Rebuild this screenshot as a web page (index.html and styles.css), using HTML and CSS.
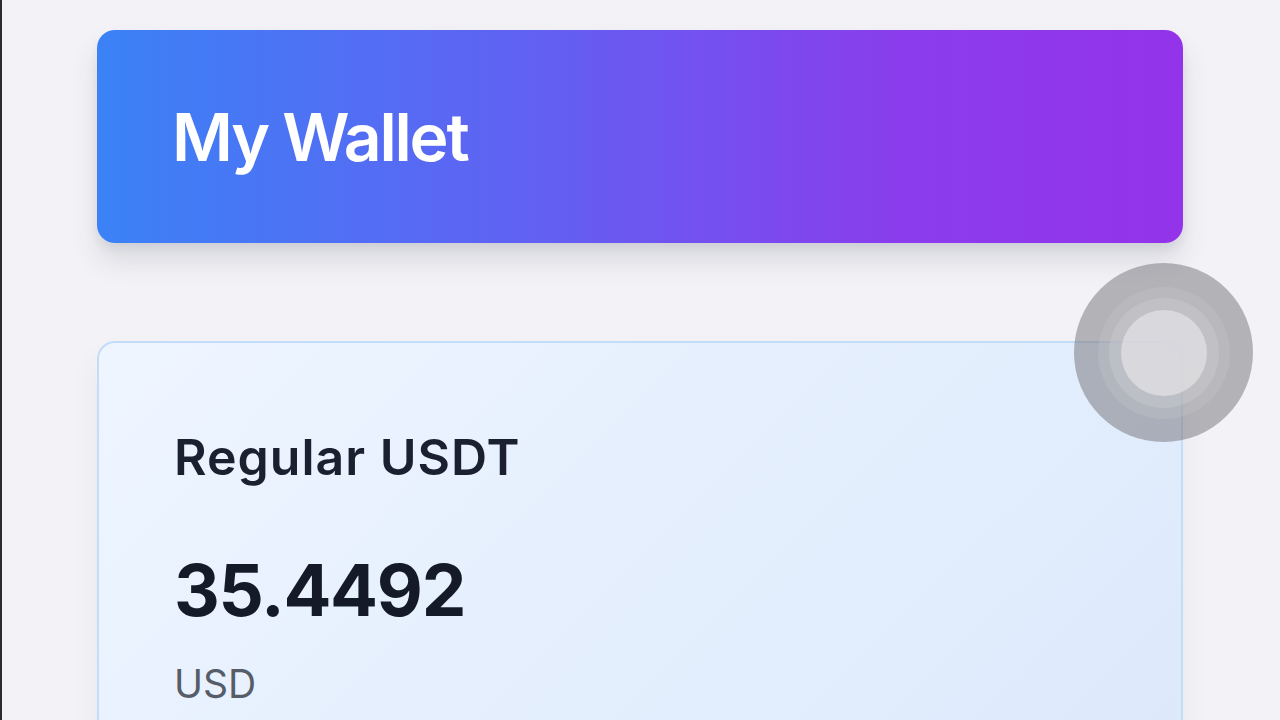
FILE: index.html
```html
<!DOCTYPE html>
<html lang="en">
<head>
<meta charset="utf-8">
<title>My Wallet</title>
<link rel="stylesheet" href="styles.css">
</head>
<body>
<div class="screen">
  <main class="page">
    <header class="hero">
      <h1 class="hero-title">My Wallet</h1>
    </header>
    <section class="balance-card">
      <h2 class="balance-label">Regular USDT</h2>
      <div class="balance-amount">35.4492</div>
      <div class="balance-unit">USD</div>
    </section>
  </main>
  <div class="assistive-touch" aria-hidden="true">
    <div class="at-ring at-ring-1"></div>
    <div class="at-ring at-ring-2"></div>
    <div class="at-core"></div>
  </div>
</div>
</body>
</html>
```

FILE: styles.css
```css
* { box-sizing: border-box; }
html, body {
  margin: 0;
  padding: 0;
  width: 1280px;
  height: 720px;
  overflow: hidden;
}
body {
  background: #f3f3f7;
  font-family: Inter, "Noto Sans", "Liberation Sans", sans-serif;
  color: #111827;
}
.screen {
  position: relative;
  width: 1280px;
  height: 720px;
  border-left: 2px solid #2a2a30;
  overflow: hidden;
}
.page {
  padding: 30px 97px 0 95px;
  display: flex;
  flex-direction: column;
  gap: 98px;
}
.hero {
  height: 213px;
  border-radius: 18px;
  background: linear-gradient(90deg, #3b82f6 0%, #6161f2 40%, #8b3cec 75%, #9333ea 100%);
  box-shadow: 0 18px 28px rgba(30, 30, 60, 0.12), 0 6px 10px rgba(30, 30, 60, 0.06);
  display: flex;
  align-items: center;
  padding-left: 75px;
}
.hero-title {
  margin: 0;
  color: #ffffff;
  font-size: 66px;
  font-weight: 600;
  line-height: 1;
  letter-spacing: -2.2px;
}
.balance-card {
  height: 420px;
  border: 2px solid #c3dcf7;
  border-radius: 18px;
  background: linear-gradient(135deg, #eef5ff 0%, #e3eefd 60%, #dde9fb 100%);
  box-shadow: 0 16px 30px rgba(30, 30, 60, 0.06);
  padding: 89px 0 0 75px;
  display: flex;
  flex-direction: column;
}
.balance-label {
  margin: 0;
  font-size: 50px;
  font-weight: 600;
  line-height: 1;
  color: #1a2030;
  letter-spacing: 1px;
}
.balance-amount {
  margin-top: 73px;
  font-size: 71px;
  font-weight: 700;
  line-height: 1;
  color: #151a28;
  letter-spacing: -1.3px;
}
.balance-unit {
  margin-top: 38px;
  font-size: 39px;
  font-weight: 400;
  line-height: 1;
  color: #565c68;
}
.assistive-touch {
  position: absolute;
  left: 1072px;
  top: 263px;
  width: 179px;
  height: 179px;
  border-radius: 50%;
  background: rgba(118, 118, 124, 0.52);
}
.at-ring {
  position: absolute;
  border-radius: 50%;
  left: 50%;
  top: 50%;
  transform: translate(-50%, -50%);
}
.at-ring-1 {
  width: 132px;
  height: 132px;
  background: rgba(200, 200, 205, 0.28);
}
.at-ring-2 {
  width: 110px;
  height: 110px;
  background: rgba(210, 210, 214, 0.32);
}
.at-core {
  position: absolute;
  left: 50%;
  top: 50%;
  width: 86px;
  height: 86px;
  transform: translate(-50%, -50%);
  border-radius: 50%;
  background: rgba(222, 222, 226, 0.8);
}
```
